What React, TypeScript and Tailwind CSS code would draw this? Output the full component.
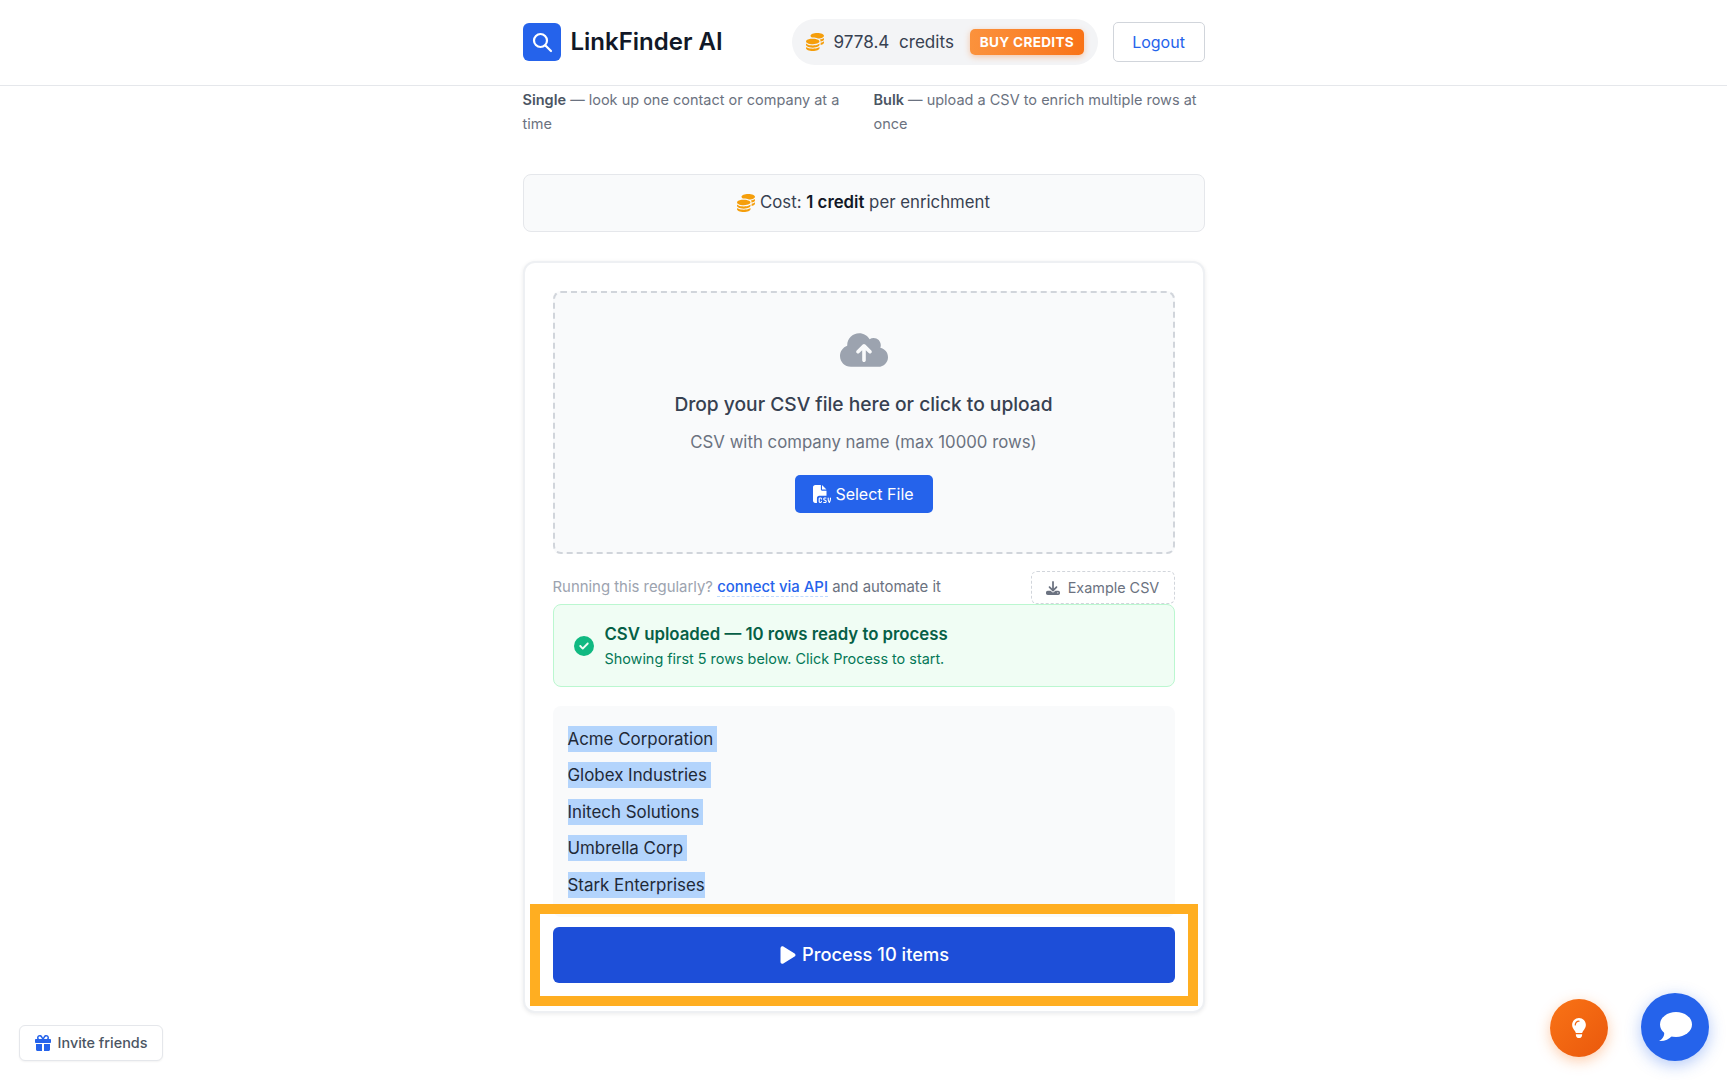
import React from 'react';
import { FaCircleCheck, FaCloudArrowUp, FaCoins, FaDownload, FaFileCsv, FaGift, FaLightbulb, FaPlay } from 'react-icons/fa6';

const rows = [
  { name: 'Acme Corporation', pad: 'pr-[4px]' },
  { name: 'Globex Industries', pad: 'pr-[4px]' },
  { name: 'Initech Solutions', pad: 'pr-[4px]' },
  { name: 'Umbrella Corp', pad: 'pr-[4px]' },
  { name: 'Stark Enterprises', pad: 'pr-0' },
];

function Header() {
  return (
    <header className="h-[86px] border-b border-[#e5e7eb] bg-white">
      <div className="mx-auto flex h-[83px] w-[682px] items-center justify-between">
        <div className="flex items-center gap-[10px]">
          <div className="flex h-[38px] w-[38px] items-center justify-center rounded-[6px] bg-[#2563eb]">
            <svg width="24" height="24" viewBox="0 0 24 24" fill="none" stroke="#ffffff" strokeWidth="2.2" strokeLinecap="round">
              <circle cx="10.5" cy="10.5" r="6.5" />
              <path d="M15.5 15.5 L21 21" />
            </svg>
          </div>
          <span className="pt-[1px] text-[24px] font-semibold leading-none text-[#111827]">LinkFinder AI</span>
        </div>
        <div className="flex items-center gap-[15px]">
          <div className="flex h-[46px] w-[306px] items-center rounded-[23px] bg-[#f3f4f6] pl-[14px] pt-[1px]">
            <FaCoins size={18} className="text-[#f59e0b]" />
            <span className="ml-[10px] whitespace-pre text-[17.1px] text-[#374151]">9778.4  credits</span>
            <span className="ml-[16px] flex h-[26px] w-[114px] items-center justify-center rounded-[5px] bg-gradient-to-r from-[#fb923c] to-[#f97316] text-[13.6px] font-bold tracking-[0.3px] text-white shadow-[0_2px_6px_rgba(249,115,22,.35)]">BUY CREDITS</span>
          </div>
          <button className="h-[40px] w-[92px] rounded-[5px] border border-[#d1d5db] bg-white text-[16px] text-[#2563eb]">Logout</button>
        </div>
      </div>
    </header>
  );
}

function UploadZone() {
  return (
    <div className="flex h-[263px] flex-col items-center rounded-[8px] border-2 border-dashed border-[#d1d5db] bg-[#f9fafb] pt-[33px]">
      <FaCloudArrowUp size={48} className="text-[#9ca3af]" />
      <p className="mt-[16px] text-[19.2px] font-medium leading-[28px] text-[#374151]">Drop your CSV file here or click to upload</p>
      <p className="mt-[12px] text-[16.8px] leading-[24px] text-[#6b7280]">CSV with company name (max 10000 rows)</p>
      <button className="mt-[21px] flex h-[38px] w-[138px] items-center justify-center gap-[4px] rounded-[5px] bg-[#2563eb] text-[16px] text-white">
        <FaFileCsv size={18} />
        Select File
      </button>
    </div>
  );
}

export default function App() {
  return (
    <div className="relative h-[1080px] overflow-hidden bg-white font-['Inter','Liberation_Sans',sans-serif]">
      <Header />
      <main className="mx-auto w-[682px]">
        <div className="grid grid-cols-[332px_331px] gap-x-[19px] pt-[2px] text-[14.5px] leading-[24px] text-[#6b7280]">
          <p><strong className="font-semibold text-[#4b5563]">Single</strong> — look up one contact or company at a time</p>
          <p><strong className="font-semibold text-[#4b5563]">Bulk</strong> — upload a CSV to enrich multiple rows at once</p>
        </div>

        <div className="mt-[38px] flex h-[58px] items-center justify-center rounded-[8px] border border-[#e5e7eb] bg-[#f9fafb] text-[16.8px] text-[#374151]">
          <FaCoins size={18} className="mr-[5px] text-[#f59e0b]" />
          <span>Cost: <strong className="font-semibold text-[#111827]">1 credit</strong> per enrichment</span>
        </div>

        <section className="relative mt-[29px] h-[752px] rounded-[12px] border-2 border-[#eef0f3] bg-white px-[28px] pt-[28px] shadow-[0_1px_4px_rgba(0,0,0,.08)]">
          <UploadZone />

          <div className="mt-[17px] flex h-[33px] items-center justify-between">
            <p className="text-[14.9px] text-[#9ca3af]">
              Running this regularly? <a className="border-b border-dashed border-[#bfdbfe] font-medium text-[#2563eb]">connect via API</a> <span className="text-[#6b7280]">and automate it</span>
            </p>
            <button className="flex h-[33px] w-[144px] items-center justify-center gap-[8px] rounded-[6px] border border-dashed border-[#d1d5db] bg-white text-[14.4px] text-[#6b7280]">
              <FaDownload size={14} />
              Example CSV
            </button>
          </div>

          <div className="flex h-[83px] items-center gap-[11px] rounded-[8px] border border-[#bbf7d0] bg-[#f0fdf4] pl-[20px]">
            <FaCircleCheck size={20} className="text-[#10b981]" />
            <div>
              <p className="text-[16.8px] font-semibold leading-[26px] text-[#065f46]">CSV uploaded — 10 rows ready to process</p>
              <p className="text-[14.4px] leading-[24px] text-[#047857]">Showing first 5 rows below. Click Process to start.</p>
            </div>
          </div>

          <div className="mt-[19px] h-[211px] rounded-[8px] bg-[#f9fafb] px-[15px] pt-[20px]">
            {rows.map((row) => (
              <div key={row.name} className="mb-[10.4px] flex h-[26px] items-center">
                <span className={`bg-[#b3d4fc] text-[16.9px] leading-[26px] text-[#1f2937] ${row.pad}`}>{row.name}</span>
              </div>
            ))}
          </div>

          <button className="mt-[10px] flex h-[56px] w-full items-center justify-center gap-[4px] rounded-[6px] bg-[#1d4ed8] text-[18.3px] font-medium text-white">
            <FaPlay size={20} />
            Process 10 items
          </button>

          <div className="pointer-events-none absolute bottom-[5px] left-[5px] right-[5px] h-[102px] border-[10px] border-[#ffae21]" />
        </section>
      </main>

      <button className="absolute bottom-[19px] left-[19px] flex h-[36px] w-[144px] items-center justify-center gap-[7px] rounded-[6px] border border-[#e5e7eb] bg-white text-[14.4px] font-medium text-[#4b5563] shadow-[0_1px_2px_rgba(0,0,0,.05)]">
        <FaGift size={16} className="text-[#2563eb]" />
        Invite friends
      </button>

      <button className="absolute bottom-[23px] right-[119px] flex h-[58px] w-[58px] items-center justify-center rounded-full bg-gradient-to-br from-[#f97316] to-[#ea580c] text-white shadow-[0_4px_14px_rgba(249,115,22,.35)]">
        <FaLightbulb size={20} />
      </button>
      <button className="absolute bottom-[19px] right-[18px] flex h-[68px] w-[68px] items-center justify-center rounded-full bg-[#2563eb] shadow-[0_4px_16px_rgba(37,99,235,.35)]">
        <svg width="34" height="30" viewBox="0 0 34 30" fill="#ffffff">
          <ellipse cx="18" cy="12.5" rx="16" ry="12.5" />
          <path d="M6 19 C7 23 5 27 1 29 C6 29.5 11 27.5 14 24 Z" />
        </svg>
      </button>
    </div>
  );
}
